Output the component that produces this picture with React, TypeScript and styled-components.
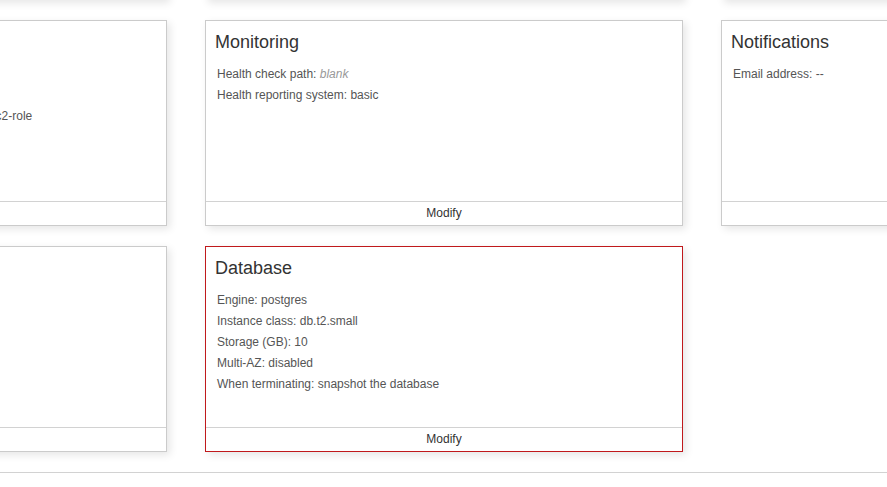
import React from 'react'
import styled, { createGlobalStyle } from 'styled-components'

const GlobalStyle = createGlobalStyle`
  html, body {
    margin: 0;
    padding: 0;
    overflow: hidden;
    background: #fff;
  }

  body {
    font-family: "Liberation Sans", Arial, Helvetica, sans-serif;
    color: #555;
  }
`

const Page = styled.div`
  width: 100%;
`

const CardGrid = styled.div`
  display: grid;
  grid-template-columns: repeat(3, 478px);
  grid-auto-rows: 206px;
  column-gap: 38px;
  row-gap: 20px;
  /* page is scrolled: one row sits above the fold, one column off to the left */
  margin: -206px 0 0 -311px;
`

const Card = styled.section<{ highlighted?: boolean }>`
  display: flex;
  flex-direction: column;
  box-sizing: border-box;
  background: #fff;
  border: 1px solid ${props => props.highlighted ? '#c0191c' : '#cbcbcb'};
  box-shadow: 3px 3px 8px rgba(0, 0, 0, 0.1);
`

const CardBody = styled.div`
  flex: 1 1 auto;
  padding: 11px 9px 0;
`

const CardTitle = styled.h3`
  margin: 0 0 12px;
  font-size: 18px;
  line-height: 20px;
  font-weight: normal;
  color: #333;
`

const SettingList = styled.ul`
  margin: 0;
  padding: 0 0 0 2px;
  list-style: none;
`

const Setting = styled.li`
  font-size: 12px;
  line-height: 21px;
  color: #555;
  white-space: nowrap;
`

const Blank = styled.em`
  color: #999;
`

const CardFooter = styled.div`
  box-sizing: border-box;
  height: 24px;
  padding-top: 1px;
  border-top: 1px solid #d2d2d2;
  font-size: 12px;
  line-height: 21px;
  color: #333;
  text-align: center;
  cursor: pointer;
`

const Divider = styled.hr`
  margin: 20px 0 0;
  border: 0;
  border-top: 1px solid #d2d2d2;
  height: 0;
`

type Category = {
  title: string
  settings: React.ReactNode[]
  highlighted?: boolean
}

const categories: (Category | null)[] = [
  { title: 'Software', settings: ['Environment properties: --'] },
  { title: 'Instances', settings: ['Instance type: t2.micro'] },
  { title: 'Capacity', settings: ['Environment type: single instance'] },

  {
    title: 'Security',
    settings: [
      'Service role: aws-elasticbeanstalk-service-role',
      'Virtual machine key pair: --',
      'Virtual machine instance profile: aws-elasticbeanstalk-ec2-role',
    ],
  },
  {
    title: 'Monitoring',
    settings: [
      <>Health check path: <Blank>blank</Blank></>,
      'Health reporting system: basic',
    ],
  },
  { title: 'Notifications', settings: ['Email address: --'] },

  { title: 'Network', settings: ['This environment is not part of a VPC.'] },
  {
    title: 'Database',
    highlighted: true,
    settings: [
      'Engine: postgres',
      'Instance class: db.t2.small',
      'Storage (GB): 10',
      'Multi-AZ: disabled',
      'When terminating: snapshot the database',
    ],
  },
  null,
]

function CategoryCard({ title, settings, highlighted }: Category) {
  return (
    <Card highlighted={highlighted}>
      <CardBody>
        <CardTitle>{title}</CardTitle>
        <SettingList>
          {settings.map((s, i) => <Setting key={i}>{s}</Setting>)}
        </SettingList>
      </CardBody>
      <CardFooter>Modify</CardFooter>
    </Card>
  )
}

export default function App() {
  return (
    <Page>
      <GlobalStyle />
      <CardGrid>
        {categories.map((c, i) =>
          c ? <CategoryCard key={c.title} {...c} /> : <div key={i} />
        )}
      </CardGrid>
      <Divider />
    </Page>
  )
}
